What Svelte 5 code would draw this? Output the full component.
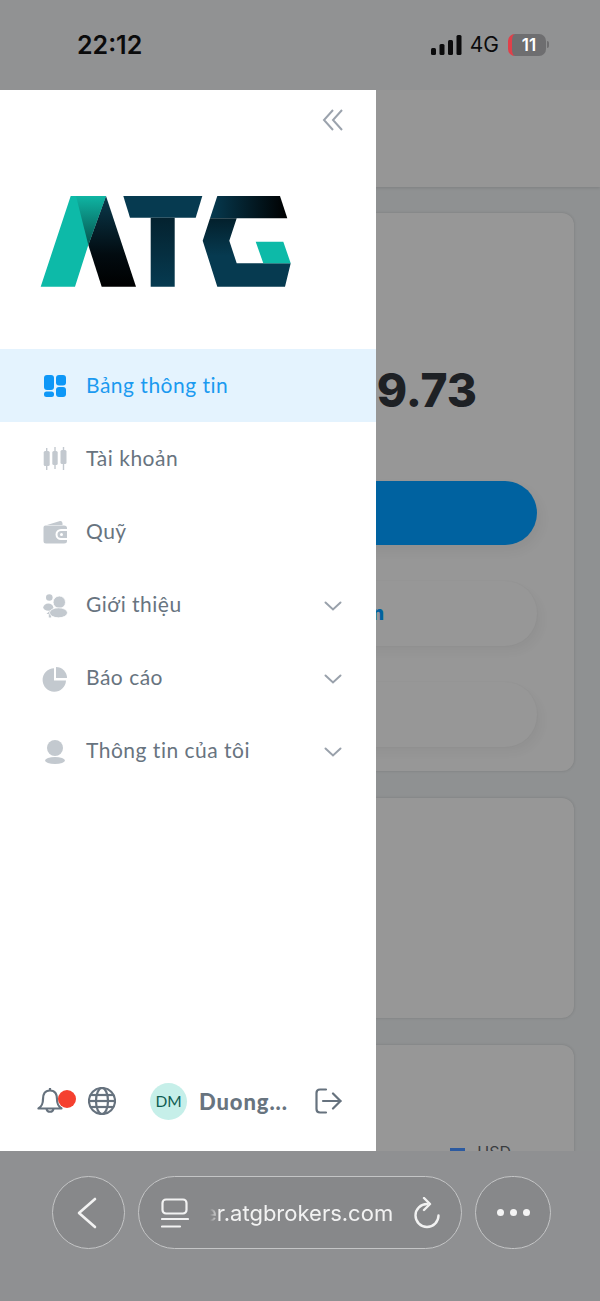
<script lang="ts">
  interface MenuItem {
    label: string;
    icon: string;
    active?: boolean;
    expandable?: boolean;
  }

  const menu: MenuItem[] = [
    { label: "Bảng thông tin", icon: "dashboard", active: true },
    { label: "Tài khoản", icon: "candles" },
    { label: "Quỹ", icon: "wallet" },
    { label: "Giới thiệu", icon: "people", expandable: true },
    { label: "Báo cáo", icon: "pie", expandable: true },
    { label: "Thông tin của tôi", icon: "person", expandable: true },
  ];
</script>

<div class="screen">
  <!-- Status bar -->
  <div class="status">
    <span class="time">22:12</span>
    <div class="status-right">
      <svg class="signal" width="31" height="20" viewBox="0 0 31 20">
        <rect x="0" y="13" width="5" height="7" rx="1.5" />
        <rect x="8.5" y="9" width="5" height="11" rx="1.5" />
        <rect x="17" y="5" width="5" height="15" rx="1.5" />
        <rect x="25.5" y="0" width="5" height="20" rx="1.5" />
      </svg>
      <span class="net">4G</span>
      <div class="battery"><span>11</span></div>
      <div class="battery-tip"></div>
    </div>
  </div>

  <div class="main">
    <!-- Page behind the drawer -->
    <div class="behind">
      <div class="topbar"></div>
      <div class="cards">
        <div class="card card-balance">
          <div class="amount">9.73</div>
          <div class="btn btn-primary"></div>
          <div class="btn btn-soft btn-link">n</div>
          <div class="btn btn-soft"></div>
        </div>
        <div class="card card-mid"></div>
        <div class="card card-chart">
          <div class="legend"><i></i><span>USD</span></div>
        </div>
      </div>
    </div>

    <!-- Drawer -->
    <aside class="drawer">
      <div class="collapse">
        <svg width="22" height="24" viewBox="0 0 22 24" fill="none" stroke="#9ba3ad" stroke-width="2">
          <path d="M11 2 L2 12 L11 22" />
          <path d="M20 2 L11 12 L20 22" />
        </svg>
      </div>

      <div class="logo">
        <svg width="252" height="92" viewBox="40 195 252 92">
          <defs>
            <linearGradient id="leg" x1="0" y1="0" x2="0" y2="1">
              <stop offset="0" stop-color="#0a3a4d" />
              <stop offset="0.65" stop-color="#020b10" />
              <stop offset="1" stop-color="#000" />
            </linearGradient>
            <linearGradient id="fold" x1="0" y1="0" x2="0" y2="1">
              <stop offset="0" stop-color="#0fb5a3" />
              <stop offset="1" stop-color="#06544f" />
            </linearGradient>
            <linearGradient id="stem" x1="0" y1="0" x2="0" y2="1">
              <stop offset="0" stop-color="#04222f" />
              <stop offset="1" stop-color="#063a50" />
            </linearGradient>
            <linearGradient id="gtop" x1="0" y1="0" x2="1" y2="0">
              <stop offset="0" stop-color="#063a50" />
              <stop offset="1" stop-color="#000" />
            </linearGradient>
            <linearGradient id="gbody" x1="0" y1="0" x2="0" y2="1">
              <stop offset="0" stop-color="#03202c" />
              <stop offset="0.55" stop-color="#063a50" />
              <stop offset="1" stop-color="#063a50" />
            </linearGradient>
          </defs>
          <polygon fill="#0dbaa8" points="40.7,286.7 75,286.7 88.3,245 106,196 70.7,196" />
          <polygon fill="url(#leg)" points="106,196 136,286.7 101.7,286.7 88.3,245" />
          <polygon fill="url(#fold)" points="76,196 106,196 88.3,245" />
          <polygon fill="#063a50" points="123.3,196 202.3,196 195.7,217.7 130,217.7" />
          <polygon fill="url(#stem)" points="150.7,217.7 174.7,217.7 174.7,286.7 150.7,286.7" />
          <polygon fill="url(#gtop)" points="217.3,196 280,196 287.3,218.3 210,218.3" />
          <polygon fill="url(#gbody)" points="210,218.3 236.7,218.3 229.3,240.7 236.7,263.3 290.7,263.3 285,286.7 217.3,286.7 202.7,240.7" />
          <polygon fill="#0dbaa8" points="255.7,241.7 283.3,241.7 290.7,263.3 263.3,263.3" />
        </svg>
      </div>

      <nav class="menu">
        {#each menu as item}
          <div class="item" class:active={item.active}>
            <svg class="icon" width="24" height="24" viewBox="0 0 24 24">
              {#if item.icon === "dashboard"}
                <rect x="1" y="1" width="10" height="15" rx="3" />
                <rect x="1" y="17.5" width="10" height="5.5" rx="2.5" />
                <rect x="13" y="1" width="10" height="10.5" rx="3" />
                <rect x="13" y="13" width="10" height="10" rx="3" />
              {:else if item.icon === "candles"}
                <rect x="0.7" y="4" width="6" height="15" rx="1.5" />
                <rect x="3" y="1" width="1.4" height="22" />
                <rect x="9.3" y="4" width="5.4" height="14" rx="1.5" />
                <rect x="11.3" y="0" width="1.4" height="22" />
                <rect x="17.5" y="3" width="6" height="14" rx="1.5" />
                <rect x="19.8" y="0" width="1.4" height="23" />
              {:else if item.icon === "wallet"}
                <path d="M4 5 L17 1 Q19 0.6 19.5 3 L19.5 5 Z" />
                <path d="M2.5 5.5 H21 Q24 5.5 24 8 V9 H18 A5.5 5.5 0 0 0 18 20 H24 V21 Q24 23.5 21 23.5 H3 Q0.5 23.5 0.5 21 V7.5 Q0.5 5.5 2.5 5.5 Z" />
                <path fill-rule="evenodd" d="M18 11 H24 V18 H18 A3.5 3.5 0 0 1 18 11 Z M18.5 13 A1.5 1.5 0 1 0 18.5 16 A1.5 1.5 0 1 0 18.5 13 Z" />
              {:else if item.icon === "people"}
                <circle cx="6.3" cy="4.5" r="3.3" />
                <ellipse cx="5.3" cy="14.2" rx="5" ry="3.6" />
                <path d="M7 17.5 L10.5 21 H8.2 V24.5 H5.8 V21 H3.5 Z" />
                <circle cx="16.3" cy="9.2" r="6.2" stroke="#fff" stroke-width="0.8" />
                <ellipse cx="15.5" cy="19.8" rx="9" ry="5" stroke="#fff" stroke-width="0.8" />
              {:else if item.icon === "pie"}
                <path d="M11 2.3 V14.5 H23 A11.7 11.7 0 1 1 11 2.3 Z" />
                <path d="M13 1 A11 11 0 0 1 24 12 H13 Z" />
              {:else}
                <circle cx="12" cy="9" r="8" />
                <ellipse cx="12" cy="21.5" rx="10" ry="3.5" />
              {/if}
            </svg>
            <span class="label">{item.label}</span>
            {#if item.expandable}
              <svg class="chevron" width="18" height="10" viewBox="0 0 18 10" fill="none" stroke="#99a1ab" stroke-width="2" stroke-linecap="round">
                <path d="M1.5 1.5 L9 8.5 L16.5 1.5" />
              </svg>
            {/if}
          </div>
        {/each}
      </nav>

      <div class="drawer-foot">
        <div class="bell">
          <svg width="26" height="28" viewBox="0 0 26 28" fill="none" stroke="#66727e" stroke-width="2.2" stroke-linejoin="round">
            <path d="M13 3.5 C7.5 3.5 6 7.5 6 12 C6 17 5 19 1.5 21.5 H24.5 C21 19 20 17 20 12 C20 7.5 18.5 3.5 13 3.5 Z" />
            <path d="M13 1 V3.5" />
            <path d="M9.5 22 A3.6 3.6 0 0 0 16.5 22" />
          </svg>
          <span class="dot"></span>
        </div>
        <svg class="globe" width="28" height="28" viewBox="0 0 28 28" fill="none" stroke="#66727e" stroke-width="2.2">
          <circle cx="14" cy="14" r="13" />
          <ellipse cx="14" cy="14" rx="6" ry="13" />
          <path d="M1 14 H27" />
          <path d="M3 8 H25" />
          <path d="M3 20 H25" />
        </svg>
        <div class="avatar">DM</div>
        <span class="name">Duong...</span>
        <svg class="logout" width="27" height="26" viewBox="0 0 27 26" fill="none" stroke="#66727e" stroke-width="2.2" stroke-linecap="round" stroke-linejoin="round">
          <path d="M11 1.5 H5 Q1.5 1.5 1.5 5 V21 Q1.5 24.5 5 24.5 H11" />
          <path d="M8 13 H25.5" />
          <path d="M18 5.5 L25.5 13 L18 20.5" />
        </svg>
      </div>
    </aside>
  </div>

  <!-- Browser bar -->
  <div class="browser">
    <div class="round">
      <svg class="back" width="22" height="32" viewBox="0 0 22 32" fill="none" stroke="#f2f2f2" stroke-width="2.6" stroke-linecap="round" stroke-linejoin="round">
        <path d="M19 2 L3 16 L19 30" />
      </svg>
    </div>
    <div class="url">
      <svg width="28" height="30" viewBox="0 0 28 30" fill="none" stroke="#f2f2f2" stroke-width="2.2" stroke-linecap="round">
        <rect x="1.5" y="1.5" width="24" height="14" rx="3.5" />
        <path d="M1 21 H27" />
        <path d="M1 28.5 H19" />
      </svg>
      <span class="url-text">er.atgbrokers.com</span>
      <svg width="28" height="32" viewBox="0 0 28 32" fill="none" stroke="#f2f2f2" stroke-width="2.4" stroke-linecap="round" stroke-linejoin="round">
        <path d="M14 7 A11.5 11.5 0 1 0 25.5 18.5" />
        <path d="M11 1 L17 7 L11 13" />
      </svg>
    </div>
    <div class="round more">
      <i></i><i></i><i></i>
    </div>
  </div>
</div>

<style>
  :global(body) {
    margin: 0;
  }

  .screen {
    width: 600px;
    height: 1301px;
    display: flex;
    flex-direction: column;
    overflow: hidden;
    background: #8f9192;
    font-family: Lato, "Noto Sans", sans-serif;
  }

  /* ── Status bar ──────────────────────────────────────────────────── */

  .status {
    height: 90px;
    flex-shrink: 0;
    display: flex;
    align-items: center;
    justify-content: space-between;
    padding: 0 51px 1px 77px;
    box-sizing: border-box;
    background: #919293;
    color: #0b0b0c;
  }

  .time {
    font-family: Inter, sans-serif;
    font-size: 25px;
    font-weight: 600;
  }

  .status-right {
    display: flex;
    align-items: center;
  }

  .signal {
    fill: #0b0b0c;
  }

  .net {
    font-family: Inter, sans-serif;
    font-size: 21px;
    font-weight: 400;
    margin-left: 8px;
    margin-right: 9px;
  }

  .battery {
    width: 38px;
    height: 22px;
    border-radius: 7px;
    background: #6e6e70;
    border-left: 4px solid #e0404a;
    box-sizing: border-box;
    display: flex;
    align-items: center;
    justify-content: center;
    color: #fff;
    font-family: Inter, sans-serif;
    font-size: 17px;
    font-weight: 600;
  }

  .battery-tip {
    width: 2px;
    height: 7px;
    margin-left: 1px;
    background: #6e6e70;
    border-radius: 0 2px 2px 0;
  }

  /* ── Page behind ─────────────────────────────────────────────────── */

  .main {
    position: relative;
    height: 1061px;
    flex-shrink: 0;
    overflow: hidden;
  }

  .topbar {
    height: 97px;
    background: #969696;
    box-shadow: 0 1px 3px rgba(0, 0, 0, 0.12);
  }

  .cards {
    display: flex;
    flex-direction: column;
    gap: 27px;
    padding: 26px 26px 0 26px;
  }

  .card {
    background: #979797;
    border-radius: 12px;
    box-shadow: 0 0 3px rgba(0, 0, 0, 0.16);
    box-sizing: border-box;
  }

  .card-balance {
    height: 558px;
    padding: 147px 37px 0 36px;
    display: flex;
    flex-direction: column;
  }

  .amount {
    height: 60px;
    margin-right: 60px;
    text-align: right;
    font-family: Inter, sans-serif;
    font-size: 46px;
    font-weight: 800;
    line-height: 60px;
    color: #1e2125;
  }

  .btn {
    border-radius: 32px;
    box-sizing: border-box;
  }

  .btn-primary {
    height: 64px;
    margin-top: 61px;
    background: #0062a0;
    box-shadow: 4px 6px 12px rgba(0, 0, 0, 0.05);
  }

  .btn-soft {
    height: 65px;
    background: #979797;
    box-shadow: 5px 6px 10px rgba(0, 0, 0, 0.035), 0 0 2px rgba(0, 0, 0, 0.04);
  }

  .btn-link {
    margin-top: 36px;
    margin-bottom: 36px;
    display: flex;
    align-items: center;
    justify-content: flex-end;
    padding-right: 153px;
    color: #0062a0;
    font-size: 19px;
    font-weight: 800;
    font-family: Inter, sans-serif;
  }

  .card-mid {
    height: 220px;
  }

  .card-chart {
    height: 300px;
    padding: 97px 63px 0 0;
    display: flex;
    justify-content: flex-end;
  }

  .legend {
    display: flex;
    align-items: flex-start;
    gap: 12px;
    color: #3a3d40;
    font-size: 16px;
    font-family: Inter, sans-serif;
    line-height: 20px;
  }

  .legend i {
    width: 15px;
    height: 7px;
    margin-top: 6px;
    background: #2c5aa0;
  }

  /* ── Drawer ──────────────────────────────────────────────────────── */

  .drawer {
    position: absolute;
    top: 0;
    bottom: 0;
    left: 0;
    width: 376px;
    background: #fff;
    display: flex;
    flex-direction: column;
  }

  .collapse {
    display: flex;
    justify-content: flex-end;
    padding: 18px 32px 0 0;
    height: 24px;
  }

  .logo {
    display: flex;
    padding: 63px 0 0 40px;
    height: 217px;
    box-sizing: border-box;
  }

  .menu {
    display: flex;
    flex-direction: column;
  }

  .item {
    height: 73px;
    display: flex;
    align-items: center;
    padding: 0 34px 0 43px;
    color: #68747f;
  }

  .item.active {
    background: #e4f3fe;
    color: #1b9af0;
  }

  .icon {
    fill: #c3c9cf;
    flex-shrink: 0;
    overflow: visible;
  }

  .active .icon {
    fill: #0e97f7;
  }

  .label {
    margin-left: 19px;
    padding-bottom: 3px;
    font-size: 21px;
    letter-spacing: 0.5px;
    flex: 1;
  }

  .chevron {
    margin-top: 2px;
  }

  .drawer-foot {
    margin-top: auto;
    height: 100px;
    display: flex;
    align-items: center;
    padding: 0 34px 0 37px;
  }

  .bell {
    position: relative;
    display: flex;
  }

  .dot {
    position: absolute;
    top: 3px;
    left: 21px;
    width: 18px;
    height: 18px;
    border-radius: 50%;
    background: #f5402f;
  }

  .globe {
    margin-left: 25px;
  }

  .avatar {
    width: 37px;
    height: 37px;
    margin-left: 34px;
    border-radius: 50%;
    background: #c6efe9;
    color: #0f5c52;
    font-size: 15.5px;
    display: flex;
    align-items: center;
    justify-content: center;
  }

  .name {
    margin-left: 12px;
    font-size: 22px;
    font-weight: 900;
    letter-spacing: 0.9px;
    color: #68747f;
    flex: 1;
    white-space: nowrap;
  }

  /* ── Browser bar ─────────────────────────────────────────────────── */

  .browser {
    flex: 1;
    display: flex;
    align-items: flex-start;
    gap: 13px;
    padding: 25px 49px 0 52px;
    background: #8f9092;
  }

  .round {
    width: 73px;
    height: 73px;
    flex-shrink: 0;
    border-radius: 50%;
    border: 1px solid #c4c5c6;
    box-sizing: border-box;
    background: #87888a;
    display: flex;
    align-items: center;
    justify-content: center;
  }

  .back {
    margin-right: 4px;
  }

  .more {
    width: 76px;
    gap: 6px;
    border-radius: 38px;
  }

  .more i {
    width: 7px;
    height: 7px;
    border-radius: 50%;
    background: #f4f4f4;
  }

  .url {
    flex: 1;
    height: 73px;
    border-radius: 37px;
    border: 1px solid #c4c5c6;
    box-sizing: border-box;
    background: #87888a;
    display: flex;
    align-items: center;
    padding: 0 20px 0 22px;
  }

  .url-text {
    flex: 1;
    margin-left: 15px;
    font-family: Inter, sans-serif;
    font-size: 22px;
    color: #f2f2f2;
    white-space: nowrap;
    overflow: hidden;
    mask-image: linear-gradient(90deg, transparent 6px, #000 15px);
  }
</style>
